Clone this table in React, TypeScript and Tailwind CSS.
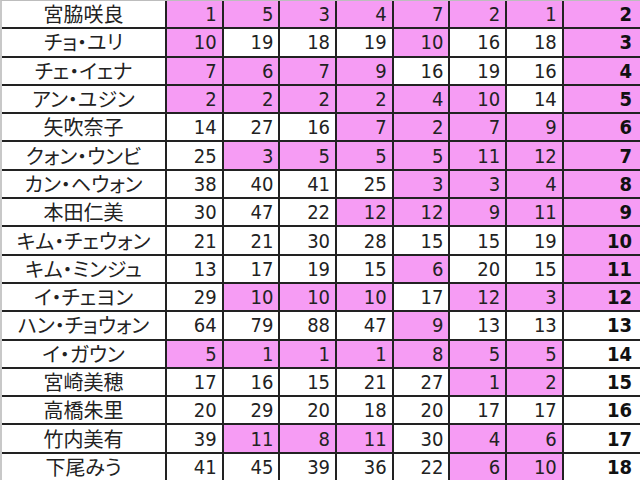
const rows: [string, number[], number][] = [
  ["宮脇咲良", [1, 5, 3, 4, 7, 2, 1], 2],
  ["チョ・ユリ", [10, 19, 18, 19, 10, 16, 18], 3],
  ["チェ・イェナ", [7, 6, 7, 9, 16, 19, 16], 4],
  ["アン・ユジン", [2, 2, 2, 2, 4, 10, 14], 5],
  ["矢吹奈子", [14, 27, 16, 7, 2, 7, 9], 6],
  ["クォン・ウンビ", [25, 3, 5, 5, 5, 11, 12], 7],
  ["カン・ヘウォン", [38, 40, 41, 25, 3, 3, 4], 8],
  ["本田仁美", [30, 47, 22, 12, 12, 9, 11], 9],
  ["キム・チェウォン", [21, 21, 30, 28, 15, 15, 19], 10],
  ["キム・ミンジュ", [13, 17, 19, 15, 6, 20, 15], 11],
  ["イ・チェヨン", [29, 10, 10, 10, 17, 12, 3], 12],
  ["ハン・チョウォン", [64, 79, 88, 47, 9, 13, 13], 13],
  ["イ・ガウン", [5, 1, 1, 1, 8, 5, 5], 14],
  ["宮崎美穂", [17, 16, 15, 21, 27, 1, 2], 15],
  ["高橋朱里", [20, 29, 20, 18, 20, 17, 17], 16],
  ["竹内美有", [39, 11, 8, 11, 30, 4, 6], 17],
  ["下尾みう", [41, 45, 39, 36, 22, 6, 10], 18],
];

// top 12 is highlighted
const cellBg = (n: number) => (n <= 12 ? "bg-[#f69cf4]" : "bg-white");

export default function App() {
  return (
    <div className="h-[480px] w-[640px] overflow-hidden bg-white">
      <div className="border-l-2 border-t border-l-[#c8c8c8] border-t-[#bdbdbd]">
        <div className="grid grid-cols-[163px_repeat(7,54.7px)_1fr] auto-rows-[26.3px] gap-[2px] bg-[#222]">
          {rows.map(([name, nums, rank]) => (
            <div key={name} className="contents">
              <div className="flex items-center justify-center bg-white text-[20px] leading-none text-[#222] [font-family:'Noto_Sans_CJK_JP',sans-serif] [font-feature-settings:'palt']">
                {name}
              </div>
              {nums.map((n, i) => (
                <div
                  key={i}
                  className={`flex items-center justify-end pr-[5px] text-[20px] leading-none text-[#222] [font-family:'DejaVu_Sans_Condensed','Liberation_Sans',sans-serif] ${cellBg(n)}`}
                >
                  {n}
                </div>
              ))}
              <div
                className={`flex items-center justify-end pr-2 text-[20px] font-bold leading-none text-[#111] [font-family:'DejaVu_Sans_Condensed','Liberation_Sans',sans-serif] ${cellBg(rank)}`}
              >
                {rank}
              </div>
            </div>
          ))}
        </div>
      </div>
    </div>
  );
}
